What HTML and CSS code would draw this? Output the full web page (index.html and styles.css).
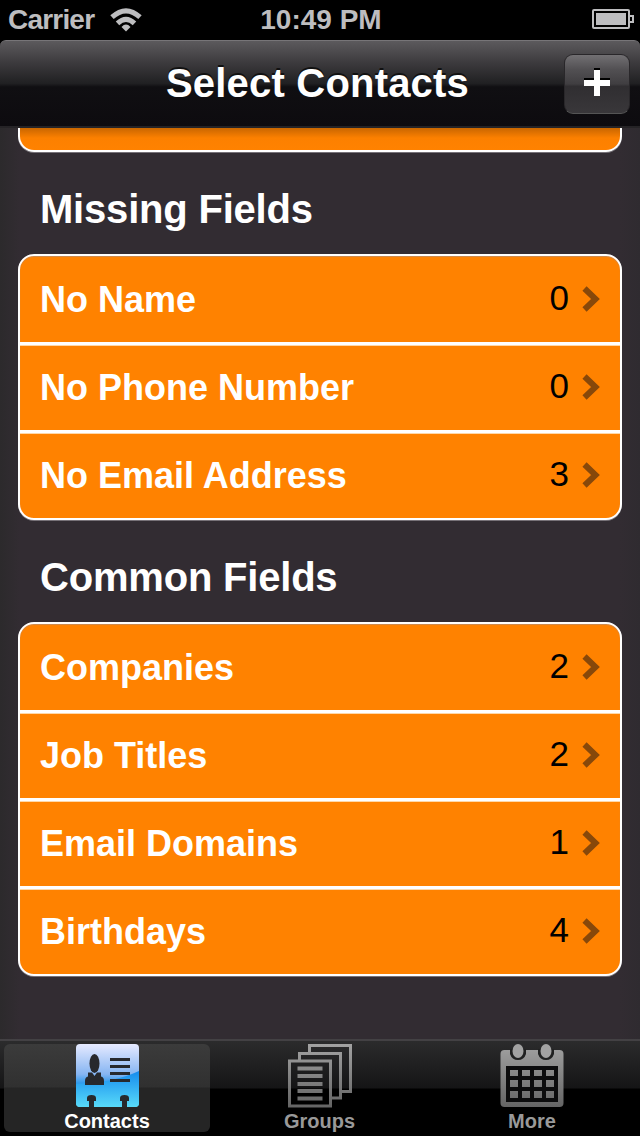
FILE: index.html
```
<!DOCTYPE html>
<html lang="en">
<head>
  <meta charset="utf-8">
  <meta name="viewport" content="width=device-width">
  <title>Select Contacts</title>
  <link rel="stylesheet" href="styles.css">
</head>
<body>

<div class="status">
  <div class="signal">
    <span class="carrier">Carrier</span>
    <svg class="wifi" width="32" height="24" viewBox="0 0 32 24">
      <g fill="none" stroke="#bdbdbf" stroke-width="5">
        <path d="M2 9.2 Q16 -3.6 30 9.2"/>
        <path d="M7.500 15.400 Q16 7.200 24.500 15.400"/>
      </g>
      <path d="M11.500 19 Q16 14.200 20.500 19 L16 23.6 Z" fill="#bdbdbf"/>
    </svg>
  </div>
  <span class="time">10:49 PM</span>
  <svg class="battery" width="42" height="20" viewBox="0 0 42 20">
    <rect x="1" y="1" width="36" height="18" rx="1" fill="none" stroke="#bdbdbf" stroke-width="2"/>
    <rect x="4" y="4" width="30" height="12" fill="#bdbdbf"/>
    <path d="M38 7h3v6h-3" fill="none" stroke="#bdbdbf" stroke-width="2"/>
  </svg>
</div>

<header class="navbar">
  <h1>Select Contacts</h1>
  <button class="add" aria-label="Add">
    <svg width="26" height="28" viewBox="0 0 26 28">
      <path d="M10 0h6v10h10v6H16v10h-6V16H0v-6h10z" fill="#000"/>
      <path d="M10 2h6v10h10v6H16v10h-6V18H0v-6h10z" fill="#fff"/>
    </svg>
  </button>
</header>

<main>
  <ul class="group cut"><li></li></ul>

  <h2>Missing Fields</h2>
  <ul class="group">
    <li>No Name <span class="count">0</span><svg class="arrow" viewBox="0 0 18 26"><path d="M2.5 2.5 13.5 13 2.5 23.5"/></svg></li>
    <li>No Phone Number <span class="count">0</span><svg class="arrow" viewBox="0 0 18 26"><path d="M2.5 2.5 13.5 13 2.5 23.5"/></svg></li>
    <li>No Email Address <span class="count">3</span><svg class="arrow" viewBox="0 0 18 26"><path d="M2.5 2.5 13.5 13 2.5 23.5"/></svg></li>
  </ul>

  <h2>Common Fields</h2>
  <ul class="group">
    <li>Companies <span class="count">2</span><svg class="arrow" viewBox="0 0 18 26"><path d="M2.5 2.5 13.5 13 2.5 23.5"/></svg></li>
    <li>Job Titles <span class="count">2</span><svg class="arrow" viewBox="0 0 18 26"><path d="M2.5 2.5 13.5 13 2.5 23.5"/></svg></li>
    <li>Email Domains <span class="count">1</span><svg class="arrow" viewBox="0 0 18 26"><path d="M2.5 2.5 13.5 13 2.5 23.5"/></svg></li>
    <li>Birthdays <span class="count">4</span><svg class="arrow" viewBox="0 0 18 26"><path d="M2.5 2.5 13.5 13 2.5 23.5"/></svg></li>
  </ul>
</main>

<nav class="tabs">
  <a class="tab active">
    <svg width="64" height="64" viewBox="0 0 64 64">
      <defs>
        <linearGradient id="blue" x1="0" y1="0" x2="0" y2="1">
          <stop offset="0" stop-color="#e6eaff"/>
          <stop offset=".48" stop-color="#86b5f2"/>
          <stop offset=".62" stop-color="#309bec"/>
          <stop offset="1" stop-color="#5de0fb"/>
        </linearGradient>
        <linearGradient id="deep" x1="0" y1="0" x2="0" y2="1">
          <stop offset="0" stop-color="#168bee"/>
          <stop offset="1" stop-color="#58daf9"/>
        </linearGradient>
      </defs>
      <rect x="1" width="63" height="63" rx="4" fill="url(#blue)"/>
      <path d="M1 40Q38 39 64 27V59q0 4-4 4H5q-4 0-4-4z" fill="url(#deep)"/>
      <g fill="#27292d">
        <ellipse cx="19.500" cy="19.500" rx="5" ry="9.500"/>
        <path d="M10 41v-4q0-4 3-4.500v-4h4l2.500 3.500 2.500-3.500h4v4q3 .5 3 4.500v4z"/>
        <path d="M35 14h20v3H35zM35 21h20v3H35zM35 28h20v3H35zM35 35h20v3H35z"/>
        <path d="M12 54q0-3 4.500-3t4.500 3v3h-2v6h-5v-6h-2zM45 54q0-3 4.500-3t4.500 3v3h-2v6h-5v-6h-2z"/>
      </g>
    </svg>
    <span>Contacts</span>
  </a>
  <a class="tab">
    <svg width="64" height="64" viewBox="0 0 64 64">
      <defs>
        <linearGradient id="grey" gradientUnits="userSpaceOnUse" x1="0" y1="0" x2="0" y2="64">
          <stop offset="0" stop-color="#a2a2a2"/>
          <stop offset="1" stop-color="#646464"/>
        </linearGradient>
      </defs>
      <g fill="none" stroke="url(#grey)" stroke-width="3">
        <path d="M21.500 9V1.500h41v46H53"/>
        <path d="M11.500 16V9.500h41v44.500H43"/>
        <path d="M1.500 17h41v45h-41z"/>
      </g>
      <path d="M9.500 22.500h25v4h-25zM9.500 30h25v4h-25zM9.500 38h25v4h-25zM9.500 45h25v4h-25zM9.500 52.500h25v4h-25z" fill="url(#grey)"/>
    </svg>
    <span>Groups</span>
  </a>
  <a class="tab">
    <svg width="64" height="64" viewBox="0 0 64 64">
      <rect x=".5" y="6" width="63" height="57" rx="4" fill="url(#grey)"/>
      <path d="M6 22h52v36H6z" fill="#0c0c0d"/>
      <path d="M10 5h16v5q-2 6-8 6t-8-6zM38 5h16v5q-2 6-8 6t-8-6z" fill="#202121"/>
      <g fill="#a2a2a2">
        <ellipse cx="18" cy="7" rx="5.500" ry="7"/>
        <ellipse cx="46" cy="7" rx="5.500" ry="7"/>
      </g>
      <path d="M10 26h8v6h-8zm12 0h8v6h-8zm12 0h8v6h-8zm12 0h8v6h-8zM10 36h8v7h-8zm12 0h8v7h-8zm12 0h8v7h-8zm12 0h8v7h-8zM10 47h8v7h-8zm12 0h8v7h-8zm12 0h8v7h-8zm12 0h8v7h-8z" fill="url(#grey)"/>
    </svg>
    <span>More</span>
  </a>
</nav>

</body>
</html>
```
FILE: styles.css
```
* { box-sizing: border-box; }
body {
    margin: 0;
    width: 640px;
    height: 1136px;
    overflow: hidden;
    display: flex;
    flex-direction: column;
    background: #000;
    color: #fff;
    font-family: "Liberation Sans", Arial, sans-serif;
    font-weight: bold;
}

/* status bar */
.status {
    height: 40px;
    flex: none;
    display: grid;
    grid-template-columns: 1fr auto 1fr;
    align-items: center;
    padding: 0 6px 0 8px;
    color: #bdbdbf;
    font-size: 28px;
    line-height: 40px;
}
.signal {
    display: flex;
    align-items: center;
    gap: 16px;
}
.carrier { letter-spacing: -0.8px; }
.wifi { margin-top: -1px; }
.battery { justify-self: end; margin-top: -2px; }

/* title bar */
.navbar {
    position: relative;
    height: 88px;
    flex: none;
    display: flex;
    align-items: center;
    justify-content: center;
    border-radius: 6px 6px 0 0;
    border-top: 1px solid #777578;
    border-bottom: 2px solid #252326;
    background: linear-gradient(#5c5a5d, #3d3b3e 25%, #202022 50%, #100f12 54%, #0d0b0f);
}
h1 {
    margin: 0 0 1px;
    padding-right: 5px;
    font-size: 40px;
    line-height: 46px;
    letter-spacing: 0.2px;
    text-shadow: 0 -2px 0 #111;
}
.add {
    position: absolute;
    right: 10px;
    top: 13px;
    width: 66px;
    height: 60px;
    padding: 0 0 5px;
    display: flex;
    align-items: center;
    justify-content: center;
    border: 1px solid #29272a;
    border-bottom-color: #555;
    border-radius: 9px;
    background: linear-gradient(#727073, #525053 25%, #403e41 50%, #302e31 54%, #39373a);
}

/* list */
main {
    flex: 1;
    padding: 0 18px;
    background: linear-gradient(to right, #2c2a2c, #322c32 20px, #322c32 620px, #2f2b30);
}
.group {
    list-style: none;
    margin: 0;
    padding: 0;
    border: 2px solid #fff;
    border-radius: 16px;
    background: #ff8200;
    box-shadow: 0 1px 0 #777278, inset 0 1px 1px #c98b55;
}
.group li {
    height: 88px;
    display: flex;
    align-items: center;
    padding: 0 20px;
    border-top: 3px solid #fff;
    box-shadow: inset 0 1px 0 #ffd8a8;
    font-size: 36px;
}
.group li:first-child {
    height: 86px;
    border-top: 0;
    box-shadow: none;
    padding-top: 2px;
}
.group.cut {
    border-top: 0;
    border-radius: 0 0 16px 16px;
    background: linear-gradient(#c96600, #fc8000 10px, #ff8200);
    box-shadow: 0 1px 0 #777278;
}
.group.cut li:first-child { height: 22px; padding: 0; }
.count {
    margin: -4px 13px 0 auto;
    color: #000;
    font-size: 35px;
    font-weight: normal;
}
.arrow {
    width: 18px;
    height: 26px;
    margin-top: -1px;
}
.group li:first-child .arrow { margin-top: -2px; }
.arrow path {
    fill: none;
    stroke: #87480a;
    stroke-width: 6px;
}
h2 {
    margin: 0;
    padding: 34px 22px 22px;
    font-size: 40px;
    line-height: 46px;
    letter-spacing: -0.2px;
}

/* tab bar */
.tabs {
    height: 97px;
    flex: none;
    display: flex;
    gap: 6.5px;
    padding: 3px 4px;
    border-top: 2px solid #434144;
    background: linear-gradient(#2b2b2c, #151516 47px, #000 48px);
}
.tab {
    width: 206px;
    height: 88px;
    display: flex;
    flex-direction: column;
    align-items: center;
    border-radius: 6px;
    color: #999;
    font-size: 20px;
}
.tab.active {
    color: #fff;
    background: linear-gradient(#3b3b3b, #303030 43px, #252525 44px);
}
.tab svg { flex: none; }
.tab span { line-height: 24px; margin-top: 1px; }
```
